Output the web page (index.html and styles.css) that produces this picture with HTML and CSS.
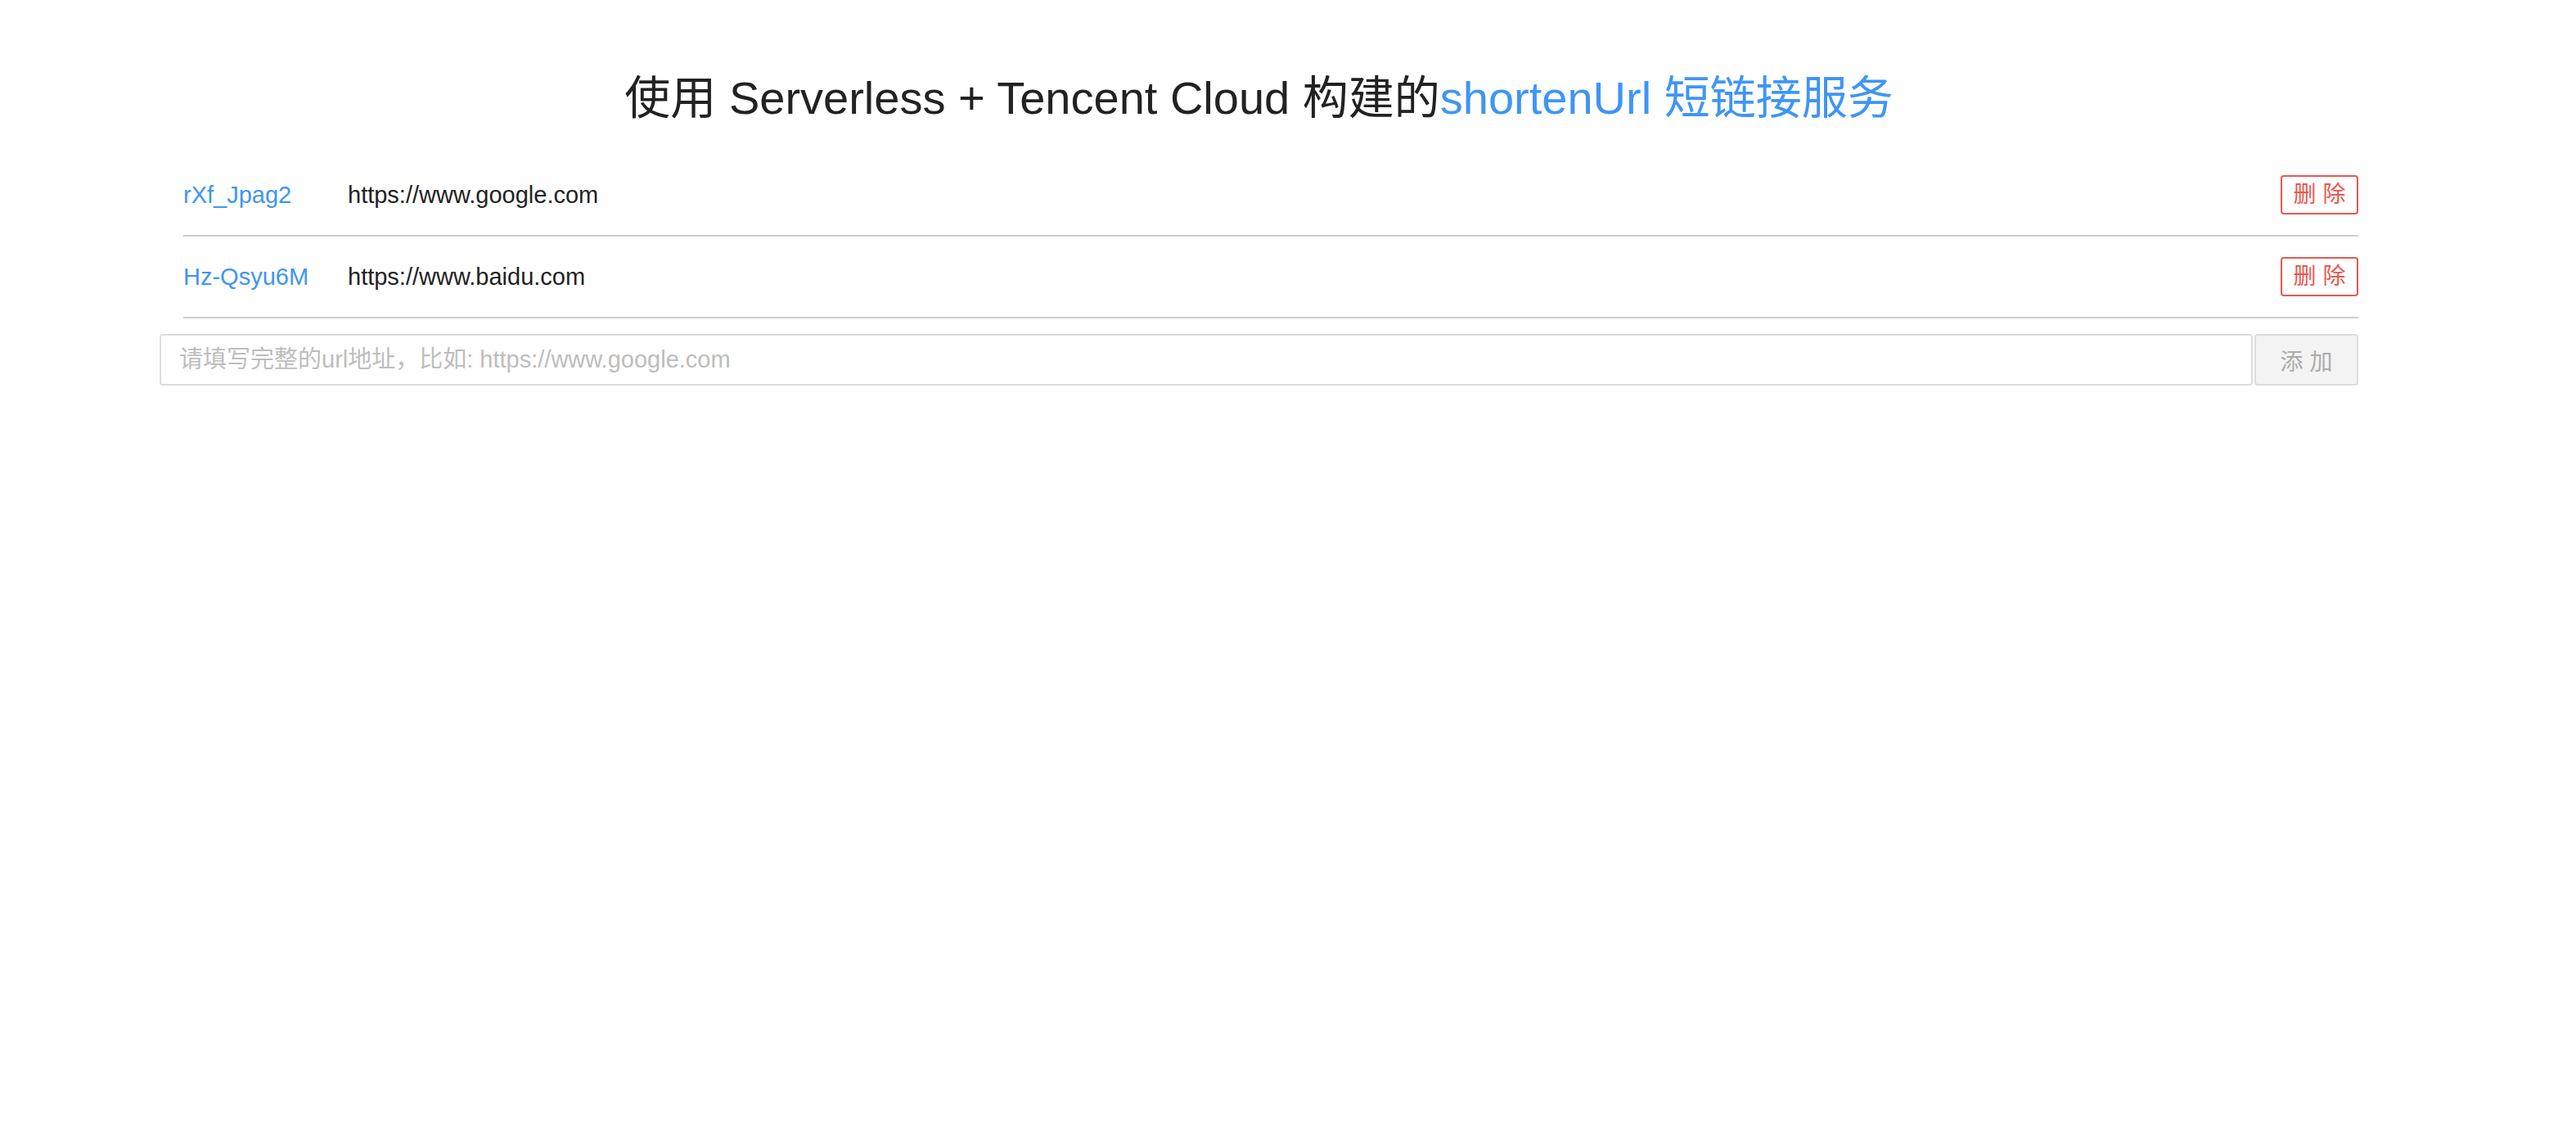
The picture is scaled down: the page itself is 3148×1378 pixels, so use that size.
FILE: index.html
```html
<!DOCTYPE html>
<html lang="zh-CN">
<head>
<meta charset="utf-8">
<title>shortenUrl</title>
<link rel="stylesheet" href="styles.css">
</head>
<body>
<div class="app">
  <h1 class="title">使用 Serverless + Tencent Cloud 构建的<span class="accent">shortenUrl 短链接服务</span></h1>
  <ul class="list">
    <li class="row">
      <span class="key">rXf_Jpag2</span>
      <span class="url">https://www.google.com</span>
      <button class="del" type="button">删 除</button>
    </li>
    <li class="row">
      <span class="key">Hz-Qsyu6M</span>
      <span class="url">https://www.baidu.com</span>
      <button class="del" type="button">删 除</button>
    </li>
  </ul>
  <form class="add">
    <input class="add-input" type="text" placeholder="请填写完整的url地址，比如: https://www.google.com">
    <button class="add-btn" type="button">添 加</button>
  </form>
</div>
</body>
</html>
```
FILE: styles.css
```css
html, body {
  margin: 0;
  padding: 0;
  background: #fff;
}
body {
  font-family: "Liberation Sans", "Noto Sans CJK SC", sans-serif;
  color: #222;
}
.app {
  width: 2687px;
  margin-left: 195px;
  padding-top: 84px;
}
.title {
  margin: 0 0 33px 0;
  font-size: 56px;
  line-height: 72px;
  font-weight: 400;
  text-align: center;
  color: #222;
}
.accent {
  color: #3f95f5;
}
.list {
  list-style: none;
  margin: 0;
  padding: 0 0 0 29px;
}
.row {
  display: flex;
  align-items: center;
  height: 98px;
  border-bottom: 2px solid #cfcfcf;
  font-size: 29px;
}
.key {
  width: 201px;
  flex: none;
  color: #3f95f5;
  cursor: pointer;
}
.url {
  flex: 1;
  color: #222;
}
.del {
  flex: none;
  width: 95px;
  height: 48px;
  padding: 0;
  border: 2px solid #e8584f;
  border-radius: 4px;
  background: #fff;
  color: #e8584f;
  font-family: "Liberation Sans", "Noto Sans CJK SC", sans-serif;
  font-size: 28px;
  line-height: 44px;
}
.add {
  display: flex;
  gap: 2px;
  margin-top: 19px;
}
.add-input {
  flex: 1;
  height: 63px;
  box-sizing: border-box;
  border: 2px solid #ddd;
  border-radius: 4px;
  padding: 0 0 0 22px;
  font-family: "Liberation Sans", "Noto Sans CJK SC", sans-serif;
  font-size: 29px;
  color: #222;
  outline: none;
}
.add-input::placeholder {
  color: #bdbdbd;
}
.add-btn {
  flex: none;
  width: 127px;
  height: 63px;
  box-sizing: border-box;
  border: 2px solid #ddd;
  border-radius: 4px;
  background: #f3f3f3;
  color: #ababab;
  font-family: "Liberation Sans", "Noto Sans CJK SC", sans-serif;
  font-size: 28px;
  padding: 0;
}
```
